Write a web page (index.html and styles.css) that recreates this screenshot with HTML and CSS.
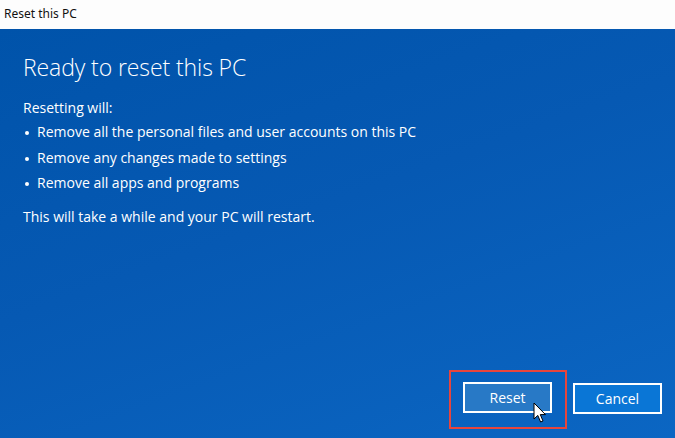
FILE: index.html
```html
<!DOCTYPE html>
<html lang="en">

<head>
    <meta charset="UTF-8">
    <title>Reset this PC</title>
    <link rel="stylesheet" href="styles.css">
</head>

<body>

    <!-- Title bar -->
    <div class="titlebar">Reset this PC</div>

    <!-- Dialog body -->
    <div class="dialog">
        <div class="content">
            <h1>Ready to reset this PC</h1>
            <p class="intro">Resetting will:</p>
            <ul>
                <li>Remove all the personal files and user accounts on this PC</li>
                <li>Remove any changes made to settings</li>
                <li>Remove all apps and programs</li>
            </ul>
            <p class="note">This will take a while and your PC will restart.</p>
        </div>

        <div class="actions">
            <div class="highlight">
                <button class="btn btn-reset">Reset</button>
                <svg class="cursor" width="14" height="22" viewBox="0 0 14 22">
                    <path d="M1 1 L1 17 L4.8 13.4 L7.6 20 L10 19 L7.3 12.6 L12.5 12.6 Z" fill="#fff" stroke="#000" stroke-width="1"/>
                </svg>
            </div>
            <button class="btn btn-cancel">Cancel</button>
        </div>
    </div>

</body>

</html>
```

FILE: styles.css
```css
html,
body {
    margin: 0;
    padding: 0;
    width: 675px;
    height: 438px;
    overflow: hidden;
    font-family: 'Open Sans', 'Noto Sans', sans-serif;
}

body {
    display: flex;
    flex-direction: column;
}

/* Title bar */
.titlebar {
    height: 29px;
    background-color: #fdfdfd;
    color: #111;
    font-family: 'Noto Sans', sans-serif;
    font-size: 12px;
    line-height: 28px;
    padding-left: 4px;
    box-sizing: border-box;
}

/* Blue dialog area */
.dialog {
    flex: 1;
    display: flex;
    flex-direction: column;
    justify-content: space-between;
    background: linear-gradient(160deg, #0053aa 0%, #0659b3 45%, #0b66c3 100%);
    color: #fff;
}

.content {
    padding: 22px 0 0 23px;
}

h1 {
    margin: 0;
    font-size: 23px;
    font-weight: 300;
    line-height: 32px;
    letter-spacing: -0.1px;
}

.intro {
    margin: 15px 0 0;
    font-size: 14px;
    line-height: 20px;
}

ul {
    list-style: none;
    margin: 4px 0 0;
    padding: 0;
}

ul li {
    position: relative;
    padding-left: 14px;
    font-size: 14px;
    line-height: 20px;
    margin-bottom: 5.5px;
}

ul li::before {
    content: "";
    position: absolute;
    left: 2px;
    top: 9px;
    width: 4px;
    height: 4px;
    border-radius: 50%;
    background-color: #fff;
}

.note {
    margin: 14px 0 0;
    font-size: 14px;
    line-height: 20px;
}

/* Buttons */
.actions {
    display: flex;
    align-items: center;
    justify-content: flex-end;
    padding: 0 13px 9px 0;
    gap: 6px;
}

.highlight {
    position: relative;
    border: 2px solid #e8453c;
    padding: 10px 13px 14px 12px;
}

.btn {
    width: 89px;
    height: 31px;
    border: 2px solid #fff;
    color: #fff;
    font-family: 'Open Sans', 'Noto Sans', sans-serif;
    font-size: 14px;
    padding: 0;
    box-sizing: border-box;
}

.btn-reset {
    background-color: #2879c6;
    display: block;
}

.btn-cancel {
    background-color: #0a76d6;
    margin-top: -2px;
}

.cursor {
    position: absolute;
    left: 82px;
    top: 30px;
}
```
